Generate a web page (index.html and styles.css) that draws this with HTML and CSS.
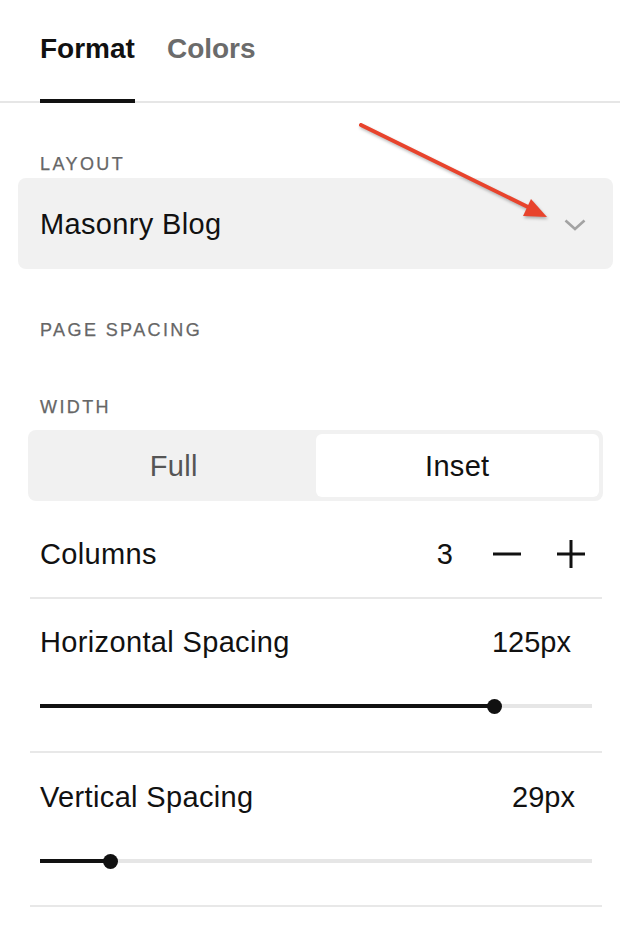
FILE: index.html
```html
<!DOCTYPE html>
<html lang="en">
<head>
<meta charset="utf-8">
<title>Format panel</title>
<link rel="stylesheet" href="styles.css">
</head>
<body>
<div class="panel">
  <nav class="tabs">
    <div class="tab tab-active">Format</div>
    <div class="tab">Colors</div>
  </nav>

  <div class="label label-layout">Layout</div>
  <div class="select">
    <span class="select-value">Masonry Blog</span>
    <svg class="chevron" width="22" height="12" viewBox="0 0 22 12"><path d="M1.5 1.5 L11 10 L20.5 1.5" fill="none" stroke="#a3a3a3" stroke-width="2.6"/></svg>
  </div>

  <div class="label label-page">Page Spacing</div>
  <div class="label label-width">Width</div>
  <div class="segmented">
    <div class="seg">Full</div>
    <div class="seg seg-active">Inset</div>
  </div>

  <div class="row row-columns">
    <span class="row-title">Columns</span>
    <span class="count">3</span>
    <svg class="step step-minus" width="30" height="30" viewBox="0 0 30 30"><path d="M1 15 H29" stroke="#111" stroke-width="3"/></svg>
    <svg class="step" width="30" height="30" viewBox="0 0 30 30"><path d="M1 15 H29 M15 1 V29" stroke="#111" stroke-width="3"/></svg>
  </div>

  <div class="row row-slider">
    <div class="row-head head-h">
      <span class="row-title">Horizontal Spacing</span>
      <span class="value">125px</span>
    </div>
    <div class="slider">
      <div class="fill" style="width: 82.2%"></div>
      <div class="thumb"></div>
    </div>
  </div>

  <div class="row row-slider">
    <div class="row-head head-v">
      <span class="row-title">Vertical Spacing</span>
      <span class="value">29px</span>
    </div>
    <div class="slider">
      <div class="fill" style="width: 12.7%"></div>
      <div class="thumb"></div>
    </div>
  </div>

  <svg class="annotation" width="620" height="300" viewBox="0 0 620 300">
    <line x1="361" y1="125" x2="530" y2="208" stroke="#e8432c" stroke-width="4" stroke-linecap="round"/>
    <polygon points="547,217 523,216 531,199" fill="#e8432c"/>
  </svg>
</div>
</body>
</html>
```

FILE: styles.css
```css
* { box-sizing: border-box; }

html, body {
  margin: 0;
  padding: 0;
  background: #ffffff;
}

body {
  font-family: "Liberation Sans", Arial, sans-serif;
  color: #111111;
}

.panel {
  position: relative;
  width: 620px;
  height: 942px;
  overflow: hidden;
}

/* Tabs */
.tabs {
  display: flex;
  gap: 32px;
  padding: 0 40px;
  border-bottom: 2px solid #e6e6e6;
}

.tab {
  height: 101px;
  padding-top: 33px;
  font-size: 28px;
  line-height: 32px;
  font-weight: 700;
  color: #6b6b6b;
}

.tab-active {
  height: 103px;
  margin-bottom: -2px;
  color: #111111;
  border-bottom: 4px solid #111111;
}

/* Section labels */
.label {
  padding-left: 40px;
  font-size: 18px;
  line-height: 20px;
  letter-spacing: 2.4px;
  text-transform: uppercase;
  color: #666666;
  -webkit-text-stroke: 0.25px #666666;
}

.label-layout { margin-top: 51px; }
.label-page { margin-top: 51px; }
.label-width { margin-top: 57px; }

/* Select */
.select {
  margin: 4px 7px 0 18px;
  height: 91px;
  border-radius: 8px;
  background: #f1f1f1;
  display: flex;
  align-items: center;
  justify-content: space-between;
  padding: 0 27px 0 22px;
}

.select-value {
  font-size: 29px;
  line-height: 32px;
  letter-spacing: 0.35px;
}

.chevron { display: block; margin-top: 2px; }

/* Segmented control */
.segmented {
  margin: 13px 17px 0 28px;
  height: 71px;
  padding: 4px;
  border-radius: 8px;
  background: #f1f1f1;
  display: grid;
  grid-template-columns: 1fr 1fr;
}

.seg {
  display: flex;
  align-items: center;
  justify-content: center;
  font-size: 29px;
  letter-spacing: 0.3px;
  color: #555555;
  border-radius: 6px;
  padding-top: 2px;
}

.seg-active {
  background: #ffffff;
  color: #111111;
}

/* Rows */
.row {
  margin: 0 18px 0 30px;
  border-bottom: 2px solid #e8e8e8;
  padding: 0 10px;
}

.row-title {
  font-size: 29px;
  line-height: 30px;
  letter-spacing: 0.35px;
}

.row-columns {
  display: flex;
  align-items: center;
  padding-top: 38px;
  padding-bottom: 28px;
  padding-right: 16px;
}

.row-columns .row-title { flex: 1; }

.count {
  font-size: 29px;
  line-height: 30px;
  margin-right: 39px;
}

.step { display: block; }
.step-minus { margin-right: 34px; }

.row-slider {
  padding-top: 28px;
  padding-bottom: 37px;
}

.row-slider + .row-slider {
  padding-top: 29px;
  padding-bottom: 36px;
}

.row-head {
  display: flex;
  justify-content: space-between;
  align-items: center;
}

.head-h { padding-right: 21px; }
.head-v { padding-right: 17px; }

.value {
  font-size: 29px;
  line-height: 30px;
}

.slider {
  position: relative;
  margin-top: 41px;
  height: 16px;
  display: flex;
  align-items: center;
}

.slider::before {
  content: "";
  position: absolute;
  left: 0;
  right: 0;
  top: 6px;
  height: 4px;
  background: #e6e6e6;
}

.fill {
  position: relative;
  height: 4px;
  background: #111111;
}

.thumb {
  position: relative;
  width: 15px;
  height: 15px;
  margin-left: -7px;
  border-radius: 50%;
  background: #111111;
}

/* Annotation arrow overlay */
.annotation {
  position: absolute;
  left: 0;
  top: 0;
  filter: drop-shadow(1px 2px 1.5px rgba(0, 0, 0, 0.28));
  pointer-events: none;
}
```
